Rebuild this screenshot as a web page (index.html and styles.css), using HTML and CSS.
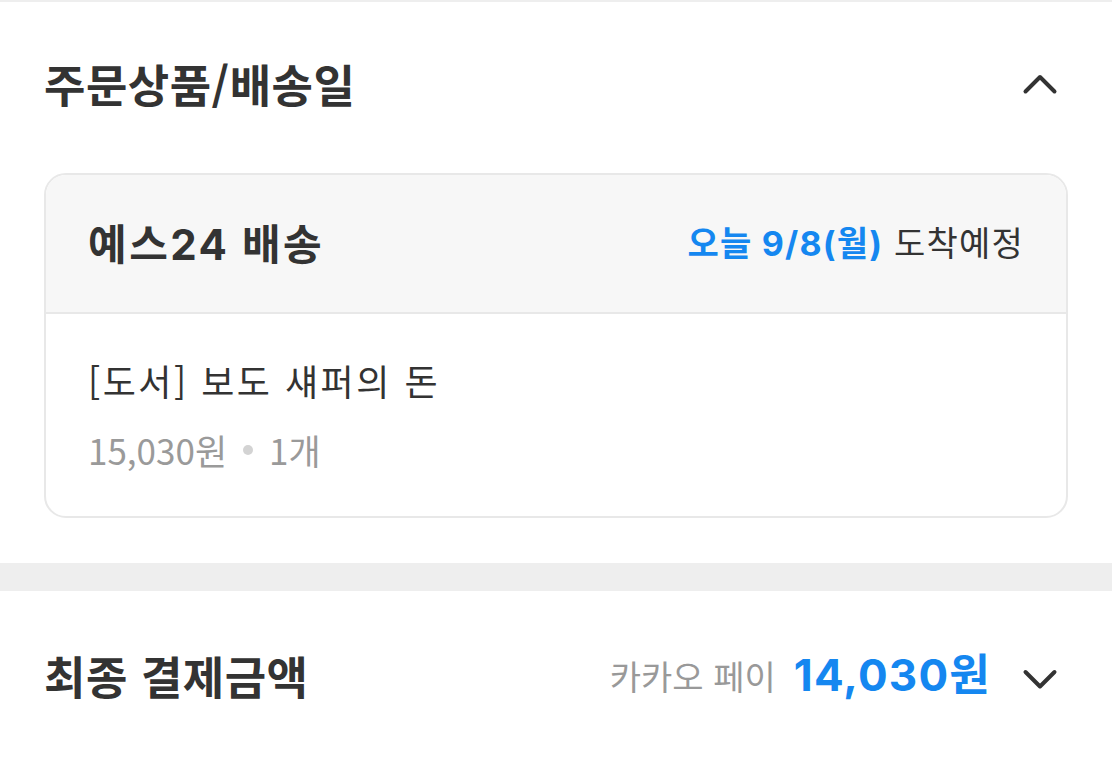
FILE: index.html
```html
<!DOCTYPE html>
<html lang="ko">
<head>
    <meta charset="UTF-8">
    <meta name="viewport" content="width=device-width, initial-scale=1.0">
    <title>주문상품/배송일</title>
    <link rel="stylesheet" href="styles.css">
</head>
<body>

    <section class="section">
        <div class="section-head">
            <h2>주문상품/배송일</h2>
            <svg class="chevron" width="40" height="40" viewBox="0 0 40 40">
                <path d="M5.5 27.5 L20 13 L34.5 27.5" fill="none" stroke="#333" stroke-width="4" stroke-linecap="round" stroke-linejoin="round"/>
            </svg>
        </div>

        <div class="card">
            <div class="card-head">
                <div class="seller">예스24 배송</div>
                <div class="arrive"><span class="arrive-date">오늘 9/8(월)</span> 도착예정</div>
            </div>
            <div class="card-body">
                <div class="item-name">[도서] 보도 섀퍼의 돈</div>
                <div class="item-meta">15,030원<span class="dot"></span>1개</div>
            </div>
        </div>
    </section>

    <div class="divider"></div>

    <section class="section total">
        <div class="section-head">
            <h2>최종 결제금액</h2>
            <div class="total-right">
                <span class="pay-method">카카오 페이</span>
                <span class="pay-amount">14,030원</span>
                <svg class="chevron chevron-down" width="40" height="40" viewBox="0 0 40 40">
                    <path d="M5.5 13 L20 27.5 L34.5 13" fill="none" stroke="#333" stroke-width="4" stroke-linecap="round" stroke-linejoin="round"/>
                </svg>
            </div>
        </div>
    </section>

</body>
</html>
```

FILE: styles.css
```css
body {
    font-family: "Noto Sans CJK KR", "Noto Sans", sans-serif;
    background-color: #ffffff;
    color: #333333;
    margin: 0;
    padding: 0;
    border-top: 2px solid #eeeeee;
}

.section {
    padding: 0 44px 45px;
}

.section-head {
    display: flex;
    justify-content: space-between;
    align-items: center;
    box-sizing: border-box;
    height: 171px;
    padding-bottom: 8px;
}

.section-head h2 {
    margin: 0;
    font-size: 45px;
    font-weight: bold;
    color: #333333;
    letter-spacing: 0.5px;
}

.chevron {
    display: block;
    margin-right: 8px;
}

.card {
    border: 2px solid #e8e8e8;
    border-radius: 22px;
    overflow: hidden;
}

.card-head {
    display: flex;
    justify-content: space-between;
    align-items: center;
    box-sizing: border-box;
    background-color: #f7f7f7;
    border-bottom: 2px solid #e8e8e8;
    height: 139px;
    padding: 0 42px 4px;
}

.seller {
    font-family: Inter, "Noto Sans CJK KR", sans-serif;
    font-size: 42px;
    font-weight: bold;
    letter-spacing: 2.5px;
}

.arrive {
    font-family: Inter, "Noto Sans CJK KR", sans-serif;
    font-size: 34px;
    color: #333333;
    letter-spacing: 1.2px;
}

.arrive-date {
    color: #1587f0;
    font-weight: bold;
}

.card-body {
    padding: 40px 42px 40px;
}

.item-name {
    font-size: 36px;
    color: #333333;
    line-height: 52px;
    letter-spacing: 2.5px;
}

.item-meta {
    display: flex;
    align-items: center;
    font-size: 35px;
    color: #9a9a9a;
    line-height: 52px;
    margin-top: 18px;
}

.dot {
    width: 10px;
    height: 10px;
    border-radius: 50%;
    background-color: #d3d3d3;
    margin: 0 16px;
}

.divider {
    height: 28px;
    background-color: #eeeeee;
}

.total {
    padding-bottom: 0;
}

.total .section-head {
    height: 172px;
    padding-bottom: 4px;
}

.total-right {
    display: flex;
    align-items: center;
}

.pay-method {
    font-size: 34px;
    color: #999999;
    margin-right: 18px;
}

.pay-amount {
    font-family: Inter, "Noto Sans CJK KR", sans-serif;
    font-size: 44px;
    font-weight: bold;
    color: #1587f0;
    letter-spacing: 1.2px;
    padding-bottom: 6px;
    margin-right: 29px;
}

.chevron-down {
    margin-top: 8px;
}
```
